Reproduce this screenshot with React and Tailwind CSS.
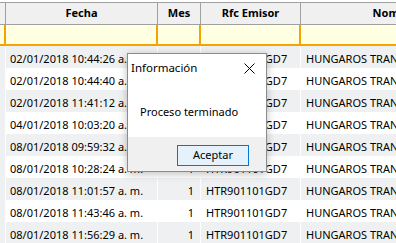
const rows = [
  '02/01/2018 10:44:26 a. m.',
  '02/01/2018 10:44:40 a. m.',
  '02/01/2018 11:41:12 a. m.',
  '04/01/2018 10:03:20 a. m.',
  '08/01/2018 09:59:32 a. m.',
  '08/01/2018 10:28:24 a. m.',
  '08/01/2018 11:01:57 a. m.',
  '08/01/2018 11:43:46 a. m.',
  '08/01/2018 11:56:29 a. m.',
]

export default function App() {
  return (
    <div className="relative w-[396px] h-[243px] overflow-hidden bg-white font-['Noto_Sans',sans-serif] text-[11px] text-black">
      <div className="pt-[2px]">
        {/* header */}
        <div className="flex h-[23px] w-[520px] border-y border-[#a0a0a0] bg-[#f0f0f0] font-bold">
          <div className="w-[6px] shrink-0 border-r border-[#a0a0a0]" />
          <div className="w-[152px] shrink-0 border-r border-[#a0a0a0] flex items-center justify-center">Fecha</div>
          <div className="w-[43px] shrink-0 border-r border-[#a0a0a0] flex items-center justify-center">Mes</div>
          <div className="w-[100px] shrink-0 border-r border-[#a0a0a0] flex items-center justify-center">Rfc Emisor</div>
          <div className="w-[188px] shrink-0 flex items-center justify-center">Nombre</div>
        </div>
        {/* filter row */}
        <div className="flex h-[21px] w-[520px] border-b-2 border-[#f5a300] bg-[#ffffe1]">
          <div className="w-[6px] shrink-0 border-r-2 border-[#f5a300]" />
          <div className="w-[152px] shrink-0 border-r-2 border-[#f5a300]" />
          <div className="w-[43px] shrink-0 border-r-2 border-[#f5a300]" />
          <div className="w-[100px] shrink-0 border-r-2 border-[#f5a300]" />
          <div className="w-[188px] shrink-0" />
        </div>
        {/* data rows */}
        {rows.map((r, i) => (
          <div key={i} className={`flex h-[22px] w-[520px] items-stretch ${i % 2 === 0 ? 'bg-[#eef0f2]' : 'bg-white'}`}>
            <div className="w-[6px] shrink-0 border-r border-white bg-[#eef0f2]" />
            <div className="w-[152px] shrink-0 border-r border-white flex items-center pt-[4px] pl-[4px] whitespace-nowrap overflow-hidden">{r}</div>
            <div className="w-[43px] shrink-0 border-r border-white flex items-center justify-end pt-[4px] pr-[6px]">1</div>
            <div className="w-[100px] shrink-0 border-r border-white flex items-center pt-[4px] pl-[5px]">HTR901101GD7</div>
            <div className="w-[188px] shrink-0 flex items-center pt-[4px] pl-[5px] whitespace-nowrap">HUNGAROS TRANSPORTES</div>
          </div>
        ))}
      </div>

      {/* message box */}
      <div className="absolute left-[127px] top-[53px] w-[140px] h-[119px] flex flex-col border border-[#8c8c8c] bg-white shadow-[0_2px_8px_rgba(0,0,0,0.25)]">
        <div className="flex h-[28px] items-center justify-between pl-[3px] pr-[11px] text-[11.5px]">
          <span>Información</span>
          <svg width="11" height="11" viewBox="0 0 11 11" className="text-black">
            <path d="M0.5 0.5L10.5 10.5M10.5 0.5L0.5 10.5" stroke="currentColor" strokeWidth="1" />
          </svg>
        </div>
        <div className="flex-1 flex items-center pl-[12px] pt-[5px]">Proceso terminado</div>
        <div className="h-[34px] bg-[#f0f0f0] flex items-center justify-end pr-[17px] pt-[2px]">
          <button className="w-[72px] h-[21px] border border-[#0078d7] bg-[#e5f1fb] flex items-center justify-center text-[11px]">Aceptar</button>
        </div>
      </div>
    </div>
  )
}
